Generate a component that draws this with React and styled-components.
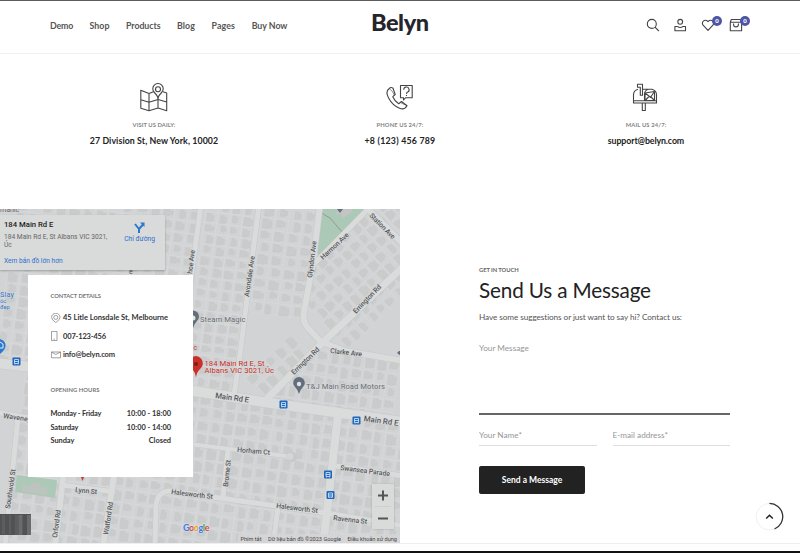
import React from 'react';
import styled, { createGlobalStyle } from 'styled-components';

const GlobalStyle = createGlobalStyle`
  * { box-sizing: border-box; }
  body { margin: 0; background: #fff; overflow: hidden; }
  button, input, textarea { font-family: inherit; }
`;

const Page = styled.div`
  display: flex;
  flex-direction: column;
  height: 553px;
  width: 800px;
  position: relative;
  background: #fff;
  border-top: 1px solid #5c5c5c;
  font-family: Lato, 'Liberation Sans', sans-serif;
  color: #222;
`;

/* ---------- header ---------- */
const Header = styled.header`
  display: grid;
  grid-template-columns: 321px 158px 1fr;
  height: 53px;
  padding: 0 50px;
  border-bottom: 1px solid #f1f1f1;
`;
const Nav = styled.nav`
  display: flex;
  gap: 16.5px;
  padding-top: 17.5px;
`;
const NavLink = styled.a`
  font-size: 8.8px;
  line-height: 13px;
  font-weight: 700;
  color: #555;
  white-space: nowrap;
  letter-spacing: ${(p) => p.$track || 0}px;
`;
const Logo = styled.div`
  padding-top: 7px;
  font-size: 23.5px;
  line-height: 28px;
  font-weight: 900;
  letter-spacing: -0.45px;
  color: #25252b;
`;
const Actions = styled.div`
  display: grid;
  grid-template-columns: 27.5px 27.5px 28px 24px;
  padding: 17px 0 0 116.5px;
`;
const Action = styled.div`
  position: relative;
  width: 14px;
  height: 14px;
  svg { display: block; }
`;
const Badge = styled.span`
  position: absolute;
  left: 11.5px;
  top: -2px;
  width: 10px;
  height: 10px;
  border-radius: 50%;
  background: #4f55a5;
  color: #fff;
  font-size: 6px;
  line-height: 10px;
  font-weight: 900;
  text-align: center;
`;

/* ---------- contact strip ---------- */
const InfoRow = styled.section`
  display: grid;
  grid-template-columns: repeat(3, 246px);
  justify-content: center;
  height: 155px;
  padding-top: 29px;
`;
const InfoItem = styled.div`
  display: flex;
  flex-direction: column;
  align-items: center;
`;
const InfoLabel = styled.div`
  margin-top: 8px;
  font-size: 5.8px;
  line-height: 8px;
  font-weight: 700;
  color: #858585;
  letter-spacing: ${(p) => p.$track}px;
`;
const InfoValue = styled.div`
  margin-top: 6px;
  font-size: 8.8px;
  line-height: 12px;
  font-weight: 700;
  color: #222;
  letter-spacing: ${(p) => p.$track}px;
`;

/* ---------- map and form ---------- */
const Main = styled.main`
  display: grid;
  grid-template-columns: 400px 1fr;
  height: 334px;
`;
const MapPanel = styled.div`
  position: relative;
  height: 334px;
  overflow: hidden;
  background: #d1d3d5;
`;
const PlaceCard = styled.div`
  position: absolute;
  left: 0;
  top: 6px;
  width: 165px;
  height: 55px;
  display: flex;
  justify-content: space-between;
  padding: 4px 10px 0 4px;
  background: #d9dada;
  box-shadow: 0 1px 2px rgba(0, 0, 0, 0.25);
  font-family: Roboto, sans-serif;
`;
const PlaceTitle = styled.div`
  font-size: 7.7px;
  line-height: 12px;
  font-weight: 500;
  color: #222;
`;
const PlaceAddress = styled.div`
  width: 110px;
  font-size: 6.65px;
  line-height: 8px;
  color: #666;
  padding-top: 2px;
  white-space: nowrap;
`;
const PlaceLink = styled.a`
  display: block;
  margin-top: 8px;
  font-size: 6.6px;
  line-height: 9px;
  color: #2b70cf;
`;
const Directions = styled.div`
  display: flex;
  flex-direction: column;
  align-items: center;
  padding-top: 3px;
  font-size: 6.7px;
  line-height: 9px;
  color: #2b70cf;
  white-space: nowrap;
  svg { display: block; margin-bottom: 2px; }
`;
const ContactCard = styled.div`
  position: absolute;
  left: 28px;
  top: 65.5px;
  width: 165px;
  height: 202.5px;
  padding: 17.5px 22px 0 22.5px;
  background: #fff;
`;
const CardTitle = styled.h3`
  margin: ${(p) => p.$top || 0}px 0 ${(p) => p.$gap}px;
  font-size: 5.8px;
  line-height: 8px;
  font-weight: 700;
  color: #777;
  letter-spacing: ${(p) => p.$track}px;
`;
const ContactLine = styled.div`
  display: grid;
  grid-template-columns: 12.5px 1fr;
  align-items: center;
  height: 18.5px;
  font-size: 7.5px;
  font-weight: 700;
  color: #333;
  white-space: nowrap;
  letter-spacing: ${(p) => p.$track}px;
  svg { display: block; }
`;
const HoursLine = styled.div`
  display: flex;
  justify-content: space-between;
  height: 13.5px;
  line-height: 13.5px;
  font-size: 7.4px;
  font-weight: 700;
  color: #333;
`;
const HoursText = styled.span`
  letter-spacing: ${(p) => p.$track}px;
`;
const ZoomControl = styled.div`
  position: absolute;
  left: 372px;
  top: 275px;
  width: 22px;
  height: 45px;
  background: #d9dada;
  box-shadow: 0 0 2px rgba(0, 0, 0, 0.2);
`;

const FormPanel = styled.form`
  display: flex;
  flex-direction: column;
  padding: 57px 70px 0 79px;
`;
const Eyebrow = styled.div`
  font-size: 5.8px;
  line-height: 8px;
  font-weight: 700;
  color: #666;
  letter-spacing: -0.05px;
`;
const Title = styled.h1`
  margin: 3px 0 0;
  font-size: 20.7px;
  line-height: 26px;
  font-weight: 400;
  letter-spacing: -0.16px;
  color: #222;
`;
const Lead = styled.p`
  margin: 9px 0 0;
  font-size: 8.2px;
  line-height: 11px;
  letter-spacing: -0.07px;
  color: #555;
`;
const MessageField = styled.textarea`
  display: block;
  width: 251px;
  height: 75px;
  margin: 17px 0 0;
  padding: 2px 0 0;
  border: 0;
  border-bottom: 2px solid #666;
  background: transparent;
  resize: none;
  overflow: hidden;
  outline: 0;
  font-size: 8.2px;
  line-height: 12px;
  &::placeholder { color: #969696; opacity: 1; }
`;
const FieldRow = styled.div`
  display: grid;
  grid-template-columns: 117.5px 117.5px;
  gap: 16px;
  margin-top: 14px;
`;
const Field = styled.input`
  width: 100%;
  height: 17px;
  padding: 0 0 4px;
  border: 0;
  border-bottom: 1px solid #dedede;
  background: transparent;
  outline: 0;
  font-size: 8.2px;
  &::placeholder { color: #969696; opacity: 1; }
`;
const Submit = styled.button`
  width: 106px;
  height: 28px;
  margin-top: 20px;
  padding: 0 0 1px;
  border: 0;
  border-radius: 2px;
  background: #222;
  color: #fff;
  font-size: 8.5px;
  font-weight: 700;
`;
const Footer = styled.footer`
  height: 10px;
  border-top: 1px solid #eee;
  border-bottom: 2px solid #111;
  background: #fefefe;
`;
const ScrollTop = styled.div`
  position: absolute;
  left: 755px;
  top: 501px;
  width: 30px;
  height: 30px;
  svg { display: block; }
`;

/* ---------- map drawing ---------- */
const rand = (n) => {
  const v = Math.sin(n * 127.1 + 11.7) * 43758.5453;
  return v - Math.floor(v);
};

function Parcels({ x, y, cols, rows, w, h, angle, seed }) {
  const items = [];
  for (let c = 0; c < cols; c++) {
    for (let r = 0; r < rows; r++) {
      const k = seed + c * 57 + r * 3;
      const px = x + c * w;
      const py = y + r * h;
      const bw = w * (0.4 + rand(k) * 0.32);
      const bh = h * (0.48 + rand(k + 1) * 0.32);
      const bx = px + 1.5 + rand(k + 2) * (w - bw - 3);
      const by = py + 1 + rand(k + 5) * 1.5;
      items.push(
        <path key={`p${c}-${r}`} d={`M${px} ${py}h${w}v${h}h${-w}z`} fill="none" stroke="#dadbdc" strokeWidth=".35" />,
        <path
          key={`b${c}-${r}`}
          d={`M${bx} ${by}h${bw * 0.6}v1.5h${bw * 0.4}v${bh - 2.5}h${-bw * 0.35}v1h${-bw * 0.65}z`}
          fill="#cacbcb" stroke="#c5c6c7" strokeWidth=".35"
        />
      );
    }
  }
  return <g transform={`rotate(${angle} ${x} ${y})`}>{items}</g>;
}

const ROADS = [
  ['M259 205L239 362L234 395', 5],
  ['M201 205L188 300', 5],
  ['M320 205L313 262L304 312Q302 322 308 328L322 343', 6],
  ['M372 205L314 264', 5],
  ['M364 205L404 245', 6],
  ['M404 266L322 343L266 400', 7],
  ['M320 341L345 351L404 361', 6],
  ['M-5 363L40 368L200 392L270 403L404 422', 10],
  ['M338 415L323 546', 8],
  ['M-5 412L40 420', 5],
  ['M18 417L5 546', 5],
  ['M64 470L55 546', 6],
  ['M115 470L103 546', 6],
  ['M63 485L115 492', 5],
  ['M190 444L286 456', 4],
  ['M228 450L223 497', 5],
  ['M155 546L156 505Q158 491 170 491L326 513L404 526', 5],
  ['M278 507L273 546', 5],
  ['M336 466L404 476', 5],
];
const LABELS = [
  ['hoe Ave', 192, 274, -83, 24, 7],
  ['Avondale Ave', 249, 297, -82, 41, 7],
  ['Glyndon Ave', 312, 278, -83, 37, 7],
  ['Harmon Ave', 323, 260, -43, 36, 7],
  ['Station Ave', 369, 216, 45, 33, 7],
  ['Errington Rd', 356, 314, -46, 37, 7],
  ['Errington Rd', 294, 375, -44, 36, 7],
  ['Clarke Ave', 330, 353, 6, 32, 7],
  ['Main Rd E', 215, 398, 8, 34, 7.8],
  ['Main Rd E', 363.5, 421, 8, 35, 7.8],
  ['Horham Ct', 237, 452, 5, 33, 7],
  ['Swansea Parade', 340, 470, 7, 50, 7],
  ['Halesworth St', 171, 494, 7, 42, 7],
  ['Halesworth St', 276, 508, 7, 42, 7],
  ['Ravenna St', 333, 520, 7, 34, 7],
  ['Brome St', 228, 487, -84, 27, 7],
  ['Waveney', 3, 418, 8, 28, 7],
  ['Southwold St', 10, 509, -82, 40, 7],
  ['Orford Rd', 57, 538, -82, 28, 7],
  ['Watford Rd', 108, 535, -81, 33, 7],
  ['Lynn St', 75, 492, 6, 22, 7],
];
const STOPS = [[283.5, 404.5], [356.5, 420.5], [328, 474.5], [330.5, 495], [16.5, 361.5]];

function MapDrawing() {
  return (
    <svg width="400" height="334" viewBox="0 209 400 334" fontFamily="Roboto, sans-serif">
      <defs>
        <clipPath id="north"><path d="M0 209H317L303 320L320 343L265 400L0 365z" /></clipPath>
        <clipPath id="east"><path d="M372 209H400V355L325 343L305 320L314 262z" /></clipPath>
        <clipPath id="southeast"><path d="M325 345L400 360V415L270 400z" /></clipPath>
        <clipPath id="south"><path d="M0 370L400 424V543H0z" /></clipPath>
      </defs>
      <rect y="209" width="400" height="334" fill="#d1d3d5" />
      <g clipPath="url(#north)">
        <Parcels x={20} y={175} cols={14} rows={19} w={13.2} h={12} angle={7.5} seed={4} />
        <Parcels x={207} y={200} cols={4} rows={19} w={12.6} h={11} angle={7.5} seed={18} />
        <Parcels x={263} y={205} cols={4} rows={9} w={13.8} h={12} angle={7.5} seed={91} />
        <path d="M263 337L304 318L320 342L265 400L240 390z" fill="#d1d3d5" />
        <Parcels x={244} y={378} cols={5} rows={2} w={13} h={14} angle={-43} seed={24} />
      </g>
      <g clipPath="url(#east)">
        <Parcels x={270} y={267} cols={13} rows={9} w={11.8} h={12.6} angle={-43} seed={32} />
      </g>
      <g clipPath="url(#southeast)">
        <Parcels x={270} y={343} cols={11} rows={5} w={12} h={13} angle={8} seed={66} />
      </g>
      <g clipPath="url(#south)">
        <Parcels x={28} y={355} cols={31} rows={14} w={12.6} h={13.3} angle={8} seed={22} />
      </g>
      <path d="M321 209H366L319 255L317 253z" fill="#acc8b7" />
      <path d="M334 214l7-5h11v3l-9 6-3-4z" fill="#c2c5c4" />
      <path d="M322 213q4 3 8 5l13 15" stroke="#929a96" strokeWidth="1" fill="none" />
      <path d="M17 475l40 5-2 18-40-6z" fill="#acc8b7" />
      <path d="M22 485l9 1v-4l9 1v4l8 1-1 7-25-3z" fill="#bdc4bf" />

      {ROADS.map(([d, w], i) => <path key={`e${i}`} d={d} stroke="#c6c8ca" strokeWidth={w + 1} fill="none" />)}
      <circle cx="292" cy="457" r="5" fill="#c6c8ca" />
      {ROADS.map(([d, w], i) => <path key={`r${i}`} d={d} stroke="#dadbdb" strokeWidth={w} fill="none" strokeLinejoin="round" />)}
      <circle cx="290" cy="456.500" r="3.500" fill="#d4d5d6" />

      <g fill="#55585b" stroke="#dadbdb" strokeWidth=".8" paintOrder="stroke" fontWeight="500">
        {LABELS.map(([t, x, y, a, len, size], i) => (
          <text key={i} x={x} y={y} fontSize={size} textLength={len} transform={`rotate(${a} ${x} ${y})`}>{t}</text>
        ))}
      </g>

      {STOPS.map(([x, y]) => (
        <g key={x} transform={`translate(${x - 4} ${y - 4})`}>
          <rect width="8" height="8" rx="1" fill="#1d67be" />
          <path d="M2 2h4v4H2zM2 4h4M2.500 6v1M5.500 6v1" stroke="#e3eaf4" strokeWidth=".8" fill="none" />
        </g>
      ))}

      <g fill="#626e7b">
        <path d="M299 394q-1-4-4-7a5.800 5.800 0 1 1 8 0q-3 3-4 7z" />
        <circle cx="299" cy="384" r="2.200" fill="#e1e3e5" />
        <path d="M193 328q-1-4-4-7a6 6 0 1 1 8 0q-3 3-4 7z" />
        <circle cx="193" cy="318" r="2.500" fill="#e1e3e5" />
        <path d="M337 209h6l-3 4z" />
        <path d="M397 353l2-2h2v5z" />
      </g>
      <path d="M196 377.500q-.5-5-4-9a7 7 0 0 1 4-12.500a7.300 7.300 0 0 1 4.500 12.500q-4 4-4.500 9z" fill="#cb2f27" />
      <circle cx="196" cy="364" r="2" fill="#7e1c19" />
      <path d="M81 477h3l-1.500 4z" fill="#c33" />
      <text x="193.500" y="350" fontSize="7" fill="#cf3d33">c</text>
      <g fill="#c42c24" stroke="#dadbdb" strokeWidth=".8" paintOrder="stroke" fontSize="7.700">
        <text x="204.500" y="365.500" textLength="60">184 Main Rd E, St</text>
        <text x="204.500" y="373" textLength="69.500">Albans VIC 3021, Úc</text>
      </g>
      <g fill="#666d74" fontSize="7.700" stroke="#dadbdb" strokeWidth=".8" paintOrder="stroke">
        <text x="200" y="322" textLength="45.500">Steam Magic</text>
        <text x="306" y="389" textLength="79">T&amp;J Main Road Motors</text>
      </g>

      <path d="M0 339q6 2 5.500 7q-.5 4-5.500 8z" fill="#2b79cf" />
      <path d="M0 342l3 2v4H0" fill="none" stroke="#e4edf7" />
      <g fill="#2e78c8" stroke="#dadbdb" strokeWidth=".7" paintOrder="stroke">
        <text x="0" y="296.500" fontSize="7.300" textLength="14">Slay</text>
        <text x="0" y="302.500" fontSize="5.800">óc</text>
        <text x="0" y="309" fontSize="5.800">đẹp</text>
      </g>
      <text x="0" y="211.500" fontSize="7" fill="#666">manic</text>
      <text x="129" y="274" fontSize="7" fill="#555">e</text>

      <path d="M0 514h31v21H0z" fill="#505254" />
      <path d="M2 515h3v19H2zM9 515h2v19H9zM15 515h8v20h-8z" fill="#5b5d5f" />
      <path d="M19 515h3v20h-3zM27 515h4v20h-4z" fill="#696b6d" />

      <text x="183" y="531" fontSize="9" fontFamily="Lato, sans-serif" fontWeight="700" textLength="26.500" stroke="#e2e3e4" strokeWidth=".8" paintOrder="stroke">
        <tspan fill="#3b78e7">G</tspan><tspan fill="#d94535">o</tspan><tspan fill="#e0a51c">o</tspan><tspan fill="#3b78e7">g</tspan><tspan fill="#35a255">l</tspan><tspan fill="#d94535">e</tspan>
      </text>
      <rect x="238" y="534" width="162" height="9" fill="#d5d6d7" fillOpacity=".75" />
      <g fontSize="5.600" fill="#444">
        <text x="240.500" y="540.500" textLength="21">Phím tắt</text>
        <text x="268" y="540.500" textLength="73">Dữ liệu bản đồ ©2023 Google</text>
        <text x="347.500" y="540.500" textLength="49.500">Điều khoản sử dụng</text>
      </g>
    </svg>
  );
}

/* ---------- icons ---------- */
const Line = ({ w, h = w, box, sw = 1, color = '#444', children }) => (
  <svg width={w} height={h} viewBox={box} fill="none" stroke={color} strokeWidth={sw} strokeLinejoin="round">{children}</svg>
);
const SearchIcon = () => <Line w={14} box="0 0 14 14" sw={1.1}><circle cx="5.800" cy="5.900" r="4.500" /><path d="M9 9.200l3.800 3.800" /></Line>;
const UserIcon = () => <Line w={14} box="0 0 14 14" sw={1.1}><circle cx="7.200" cy="3.800" r="2.400" /><path d="M4.500 8.500H1.900v4.300h10.600V8.500H9.900M4.500 8.500q2.700 2 5.400 0" /></Line>;
const HeartIcon = () => <Line w={14} box="0 0 14 14" sw={1.1}><path d="M7 12.300L2.300 7.400a3 3 0 0 1 0-4.300a2.900 2.900 0 0 1 4.200 0l.5.6.5-.6a2.900 2.900 0 0 1 4.200 0a3 3 0 0 1 0 4.300z" /></Line>;
const BagIcon = () => <Line w={14} box="0 0 14 14" sw={1.1}><path d="M1.300 4.300h11.300v8.500H1.300zM1.300 4.300l1-2.800h9l1.300 2.800M4.600 5.500v1a2.400 2.400 0 0 0 4.800 0v-1" /></Line>;
const MapIcon = () => (
  <Line w={30} box="0 0 30 30" sw={1.1}>
    <path d="M14.500 8.800L10 10.500 1.800 7.300v18l8.200 2.500 9-2.800 8.700 2.800V10L24 8.800M10 10.500v17.300M19 15v10M1.800 16.700l8.200 2.600 9-2.800 8.700 2.500" />
    <path d="M19 15q-1-3-3.600-5.500a5.200 5.200 0 1 1 7.200 0Q20 12 19 15z" />
    <circle cx="19" cy="6.300" r="2.500" />
  </Line>
);
const PhoneIcon = () => (
  <Line w={30} box="0 0 30 30" sw={1.1}>
    <path d="M4.200 5.500c-2.800 2-2.800 5.500-.6 9.500 2.400 4.600 6 8.300 11 10.300 3.600 1.400 6 .1 7.400-2.500L16.500 18.500l-2.800 2.200Q9.500 18 7.800 13.700l2.400-2.200L8 5.200Q6 3.700 4.200 5.500z" />
    <path d="M4.600 6q3 1.500 4.700 6M15.500 19.500q3 2 6 2.700" strokeWidth=".6" />
    <path d="M15.500 2.500h11.700v12.300H20.500L18.500 17v-2.200h-3z" />
    <path d="M18.700 6.700a2.700 2.700 0 1 1 4 2.400q-1.200.6-1.200 2M21.500 12v1" />
  </Line>
);
const MailboxIcon = () => (
  <Line w={30} box="0 0 30 30" sw={1.1}>
    <path d="M7 6.300Q2.500 7.500 2.500 12v8h23v-8Q25.500 7.500 21 6.300H12M2.500 17.800h23M11.300 20.200v7.300h3v-7.300M13.500 17.500V11q.5-4 4-4.700" />
    <path d="M6.500 1.300h5v11H9.300V4.200H6.500z" />
    <path d="M14 10l9.500-1.500v9H14zM14 10l5.500 4.300L23.500 8.500M14 17.500l4-4M23.500 17.500l-4-4" />
  </Line>
);
const PinIcon = () => <Line w={10} box="0 0 10 10" sw={0.7} color="#777"><path d="M4.800 9.500Q.6 6.800.6 4.400a4.200 4.200 0 1 1 8.400 0Q9 6.800 4.800 9.500z" /><circle cx="4.800" cy="4.400" r="2" /></Line>;
const MobileIcon = () => <Line w={10} box="0 0 10 10" sw={0.7} color="#777"><path d="M.5 .4h5.500v9.200H.5zM2.600 8.200h1.300" /></Line>;
const EnvelopeIcon = () => <Line w={10} box="0 0 10 10" sw={0.7} color="#777"><path d="M.4 2h9.100v5.800H.4zM.4 2l4.500 2.500L9.500 2" /></Line>;

const NAV = [['Demo', -0.19], ['Shop', 0.05], ['Products', -0.05], ['Blog', 0.1], ['Pages', 0.15], ['Buy Now', -0.02]];
const INFO = [
  [MapIcon, 'VISIT US DAILY:', 0.07, '27 Division St, New York, 10002', 0.084],
  [PhoneIcon, 'PHONE US 24/7:', 0.13, '+8 (123) 456 789', 0.22],
  [MailboxIcon, 'MAIL US 24/7:', 0.16, 'support@belyn.com', -0.1],
];
const CONTACTS = [
  [PinIcon, '45 Litle Lonsdale St, Melbourne', 0],
  [MobileIcon, '007-123-456', -0.16],
  [EnvelopeIcon, 'info@belyn.com', -0.11],
];
const HOURS = [['Monday - Friday', '10:00 - 18:00', -0.18], ['Saturday', '10:00 - 14:00', -0.15], ['Sunday', 'Closed', -0.05]];

export default function App() {
  return (
    <Page>
      <GlobalStyle />
      <Header>
        <Nav>{NAV.map(([t, k]) => <NavLink key={t} $track={k}>{t}</NavLink>)}</Nav>
        <Logo>Belyn</Logo>
        <Actions>
          <Action><SearchIcon /></Action>
          <Action><UserIcon /></Action>
          <Action><HeartIcon /><Badge>0</Badge></Action>
          <Action><BagIcon /><Badge>0</Badge></Action>
        </Actions>
      </Header>

      <InfoRow>
        {INFO.map(([Icon, label, lt, value, vt]) => (
          <InfoItem key={label}>
            <Icon />
            <InfoLabel $track={lt}>{label}</InfoLabel>
            <InfoValue $track={vt}>{value}</InfoValue>
          </InfoItem>
        ))}
      </InfoRow>

      <Main>
        <MapPanel>
          <MapDrawing />
          <PlaceCard>
            <div>
              <PlaceTitle>184 Main Rd E</PlaceTitle>
              <PlaceAddress>184 Main Rd E, St Albans VIC 3021,<br />Úc</PlaceAddress>
              <PlaceLink>Xem bản đồ lớn hơn</PlaceLink>
            </div>
            <Directions>
              <svg width="11" height="11" viewBox="0 0 11 11" fill="none" stroke="#2b79cf" strokeWidth="2">
                <path d="M5 11V7L1 2M5 7l4-4.500" /><path d="M6 .5h4.500V5z" fill="#2b79cf" stroke="none" />
              </svg>
              Chỉ đường
            </Directions>
          </PlaceCard>
          <ContactCard>
            <CardTitle $track={-0.06} $gap={8.5}>CONTACT DETAILS</CardTitle>
            {CONTACTS.map(([Icon, t, k]) => <ContactLine key={t} $track={k}><Icon /><span>{t}</span></ContactLine>)}
            <CardTitle $track={0.05} $top={22} $gap={13}>OPENING HOURS</CardTitle>
            {HOURS.map(([d, h, k]) => (
              <HoursLine key={d}><HoursText $track={k}>{d}</HoursText><HoursText $track={-0.02}>{h}</HoursText></HoursLine>
            ))}
          </ContactCard>
          <ZoomControl>
            <svg width="22" height="45" viewBox="0 0 22 45" stroke="#555" strokeWidth="2">
              <path d="M6 11.500h10M11 6.500v10M6 34.500h10" /><path d="M3 22.500h16" stroke="#c8c9ca" strokeWidth=".7" />
            </svg>
          </ZoomControl>
        </MapPanel>

        <FormPanel>
          <Eyebrow>GET IN TOUCH</Eyebrow>
          <Title>Send Us a Message</Title>
          <Lead>Have some suggestions or just want to say hi? Contact us:</Lead>
          <MessageField placeholder="Your Message" />
          <FieldRow>
            <Field placeholder="Your Name*" />
            <Field placeholder="E-mail address*" />
          </FieldRow>
          <Submit type="button">Send a Message</Submit>
        </FormPanel>
      </Main>
      <Footer />
      <ScrollTop>
        <svg width="30" height="30" viewBox="0 0 30 30" fill="none">
          <circle cx="14.500" cy="14.700" r="13.300" stroke="#f0f0f0" strokeWidth="1" />
          <path d="M14.500 1.400A13.300 13.300 0 0 1 19.500 27" stroke="#333" strokeWidth="1.300" />
          <path d="M11.200 16.500l3.300-3.200 3.300 3.200" stroke="#222" strokeWidth="1.500" />
        </svg>
      </ScrollTop>
    </Page>
  );
}
